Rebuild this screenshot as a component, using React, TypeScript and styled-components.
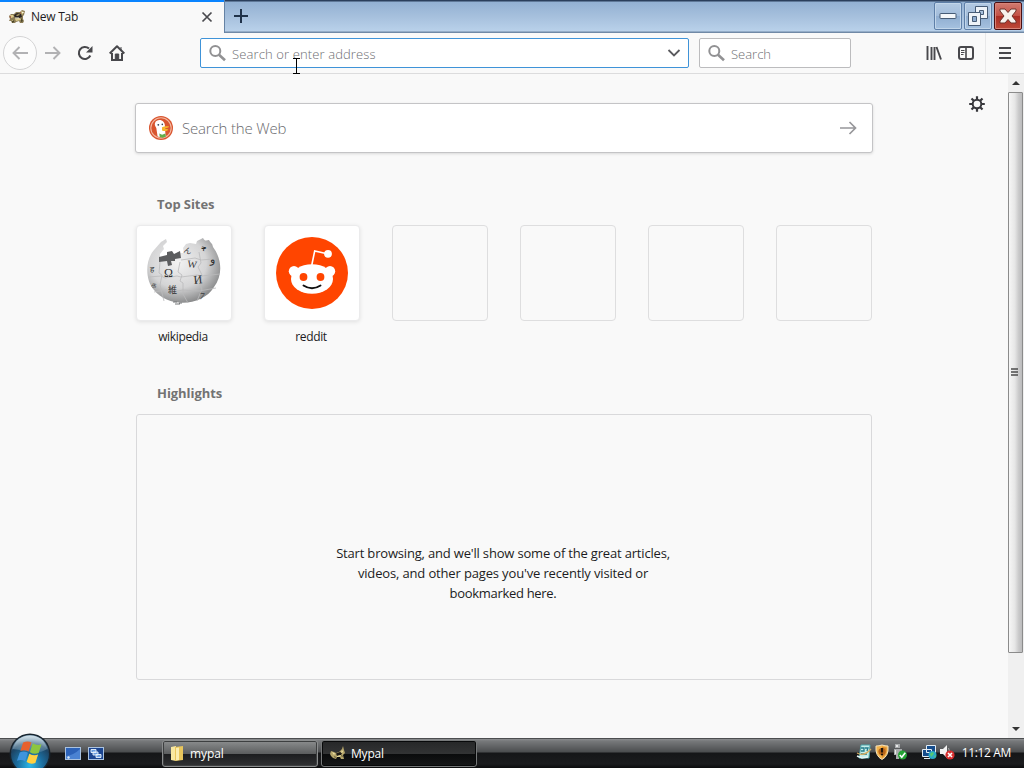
import React from "react";
import styled, { createGlobalStyle } from "styled-components";

const GlobalStyle = createGlobalStyle`
  * { box-sizing: border-box; }
  body { margin: 0; overflow: hidden; }
  button { border: 0; padding: 0; margin: 0; background: none; font: inherit; }
  svg { display: block; flex: none; }
`;

const Desktop = styled.div`
  position: relative;
  width: 1024px;
  height: 768px;
  display: flex;
  flex-direction: column;
  background: #f9f9f9;
  color: #0c0c0d;
  font-family: "Open Sans", "Noto Sans", sans-serif;
  font-size: 12px;
  overflow: hidden;
`;

const Text = styled.span<{ $size?: number; $track?: number; $color?: string; $weight?: number }>`
  font-size: ${(p) => p.$size ?? 12}px;
  letter-spacing: ${(p) => p.$track ?? 0}px;
  color: ${(p) => p.$color ?? "#1c1c22"};
  font-weight: ${(p) => p.$weight ?? 400};
  line-height: 20px;
  white-space: nowrap;
`;

/* ---------- title bar ---------- */

const TitleBar = styled.header`
  height: 33px;
  flex: none;
  display: flex;
  align-items: stretch;
  background: linear-gradient(#2b3f5c 0, #2b3f5c 1px, #93b1d3 2px, #a6c0dd 50%, #b9d1ea 31px, #7089a6 32px, #7089a6 33px);
`;

const Tab = styled.div`
  width: 224px;
  height: 33px;
  border-top: 2px solid #0a84ff;
  background: #f9f9f9;
  display: flex;
  align-items: center;
  padding: 0 11px 1px 9px;
  gap: 6px;
  & > :last-child { margin-left: auto; }
`;

const NewTabButton = styled.button`
  width: 33px;
  display: flex;
  align-items: center;
  justify-content: center;
  padding-bottom: 1px;
  border-left: 1px solid #6582a4;
`;

const WindowButtons = styled.div`
  margin-left: auto;
  display: flex;
  gap: 2px;
  padding: 2px 2px 0 0;
`;

const WindowButton = styled.button<{ $close?: boolean }>`
  width: 28px;
  height: 28px;
  display: flex;
  align-items: center;
  justify-content: center;
  border: 1px solid ${(p) => (p.$close ? "#4a1013" : "#5e7fa8")};
  border-radius: 2px;
  box-shadow: inset 0 0 0 1px ${(p) => (p.$close ? "#d88478" : "#c2d6ea")};
  background: ${(p) =>
    p.$close
      ? "linear-gradient(#d17b70, #c35247 48%, #a92c24 50%, #bd4a39)"
      : "linear-gradient(#b3cae3, #a3bddb 48%, #8fadd0 50%, #a6c2e0)"};
`;

/* ---------- navigation bar ---------- */

const NavBar = styled.nav`
  height: 41px;
  flex: none;
  display: flex;
  align-items: center;
  padding-left: 3px;
  border-bottom: 1px solid #dcdcdd;
  background: #f9f9f9;
`;

const BackButton = styled.button`
  width: 34px;
  height: 34px;
  border: 1px solid #d4d4d5;
  border-radius: 50%;
  background: #fcfcfc;
  display: flex;
  align-items: center;
  justify-content: center;
`;

const NavButton = styled.button`
  width: 32px;
  height: 32px;
  display: flex;
  align-items: center;
  justify-content: center;
`;

const Field = styled.div<{ $width: number; $active?: boolean }>`
  width: ${(p) => p.$width}px;
  height: 30px;
  margin-right: 10px;
  display: flex;
  align-items: center;
  gap: 6px;
  padding: 0 6px 0 8px;
  border: 1px solid ${(p) => (p.$active ? "#3f93d8" : "#bcbcbe")};
  border-radius: 2px;
  background: #fff;
  & > span { padding-top: 2px; }
`;

const FieldEnd = styled.div`
  margin-left: auto;
`;

const NavLeft = styled.div`
  display: flex;
  align-items: center;
  width: 197px;
`;

const NavRight = styled.div`
  margin-left: auto;
  display: flex;
  align-items: center;
`;

const MenuSlot = styled.div`
  height: 40px;
  width: 39px;
  margin-left: 3px;
  border-left: 1px solid #e8e8e9;
  display: flex;
  align-items: center;
  justify-content: center;
`;

/* ---------- page ---------- */

const Viewport = styled.div`
  height: 664px;
  flex: none;
  display: flex;
`;

const Page = styled.main`
  width: 1008px;
  flex: none;
  display: flex;
  flex-direction: column;
  align-items: center;
  padding-top: 29px;
`;

const PageHead = styled.div`
  width: 738px;
  position: relative;
`;

const SearchBox = styled.div`
  height: 50px;
  display: flex;
  align-items: center;
  gap: 9px;
  padding: 0 15px 0 13px;
  border: 1px solid #c4c4c6;
  border-radius: 3px;
  background: #fff;
  box-shadow: 0 1px 3px rgba(0, 0, 0, 0.13);
  & > :last-child { margin-left: auto; }
`;

const SettingsButton = styled.button`
  position: absolute;
  left: 834px;
  top: -7px;
`;

const Section = styled.section`
  width: 736px;
`;

const SectionTitle = styled.h3<{ $top: number }>`
  margin: ${(p) => p.$top}px 0 11px 21px;
  height: 20px;
  display: flex;
  align-items: center;
`;

const Sites = styled.div`
  display: flex;
  gap: 32px;
`;

const Site = styled.div`
  width: 96px;
  display: flex;
  flex-direction: column;
  align-items: center;
  gap: 6px;
`;

const Tile = styled.div<{ $filled?: boolean }>`
  width: 96px;
  height: 96px;
  border-radius: 4px;
  border: 1px solid ${(p) => (p.$filled ? "#ebebec" : "#dededf")};
  background: ${(p) => (p.$filled ? "#fff" : "transparent")};
  box-shadow: ${(p) => (p.$filled ? "0 1px 4px rgba(12, 12, 13, 0.1)" : "none")};
  display: flex;
  align-items: center;
  justify-content: center;
`;

const SiteLabel = styled.div`
  height: 20px;
  margin-right: 2px;
`;

const EmptyHighlights = styled.div`
  height: 266px;
  border: 1px solid #d9d9db;
  border-radius: 3px;
  display: flex;
  flex-direction: column;
  align-items: center;
  padding: 128px 2px 0 0;
`;

const Scrollbar = styled.div`
  width: 16px;
  flex: none;
  display: flex;
  flex-direction: column;
  align-items: flex-start;
  background: #f0f0f0;
`;

const ScrollArrow = styled.div`
  height: 18px;
  width: 16px;
  display: flex;
  align-items: center;
  justify-content: center;
`;

const ScrollThumb = styled.div`
  width: 15px;
  height: 561px;
  margin-bottom: auto;
  padding: 0 1px 2px 0;
  border: 1px solid #8b8b8b;
  border-radius: 1px;
  background: linear-gradient(90deg, #f6f6f6, #e6e6e6 45%, #c9c9ca 75%, #bcbcbd);
  display: flex;
  align-items: center;
  justify-content: center;
`;

/* ---------- taskbar ---------- */

const Taskbar = styled.footer`
  height: 30px;
  flex: none;
  display: flex;
  align-items: center;
  background: linear-gradient(#4c4e50 0, #4c4e50 1px, #8c8e90 1px, #77797b 3px, #4b4d4f 14px, #151618 15px, #1b1c1e 26px, #0b0c0d 30px);
`;

const StartButton = styled.button`
  width: 44px;
  height: 38px;
  margin: -8px 0 0 7px;
  align-self: flex-start;
  position: relative;
`;

const QuickLaunch = styled.div`
  display: flex;
  gap: 7px;
  padding-left: 14px;
  width: 111px;
`;

const TaskButton = styled.button<{ $active?: boolean }>`
  width: 156px;
  height: 27px;
  margin-right: 3px;
  display: flex;
  align-items: center;
  gap: 5px;
  padding: 0 0 0 ${(p) => (p.$active ? 8 : 6)}px;
  border-radius: 3px;
  border: 1px solid ${(p) => (p.$active ? "#77797a" : "#8b8d8e")};
  box-shadow: inset 0 0 0 1px ${(p) => (p.$active ? "#08090a" : "#3d3f40")};
  background: ${(p) =>
    p.$active
      ? "linear-gradient(#262728, #323334 50%, #0a0b0c 52%, #161718)"
      : "linear-gradient(#8b8d8e, #5d5f60 50%, #1c1d1f 52%, #303133)"};
  & > span { padding-top: 1px; }
`;

const Tray = styled.div`
  margin-left: auto;
  display: flex;
  align-items: center;
  padding: 0 13px 3px 0;
  gap: 2px;
`;

const TrayGap = styled.div`
  width: 9px;
`;

const Clock = styled.div`
  margin-left: 4px;
  padding-top: 3px;
`;

const Cursor = styled.div`
  position: absolute;
  left: 293px;
  top: 58px;
`;

/* ---------- drawings ---------- */

const Mascot = () => (
  <svg width="16" height="16" viewBox="0 0 16 16">
    <path d="M0 7l2-2 3 0 2-2 4 0 2-2 3 1-1 4-1 1 0 3 1 2-1 2-3 0-1-2-3 1-1 1-3 0-1-2-2 0 1-2z" fill="#8b7c55" />
    <path d="M1 6l3 0 1 2-3 1zM12 2l3 1-2 3zM6 10l5-1 1 2-5 1zM3 11l2 0 0 2-2 0z" fill="#dccb8c" />
    <path d="M5 6l3-2 4 1 1 3-3 1-4 0z" fill="#2b2522" />
    <path d="M7 6l3-1 1 1-3 1z" fill="#b8a468" />
    <path d="M6 8.500h4v1H6zM13 3h1.500v1H13z" fill="#fbf5e0" />
    <path d="M3 12l2-1 0 2-2 1zM12 9l2 3-2 1z" fill="#4a4528" />
    <path d="M0 8l2-1v2zM11 4l1-1v2z" fill="#a8553f" />
  </svg>
);

const TaskMascot = () => (
  <svg width="16" height="16" viewBox="0 0 16 16">
    <path d="M1 6l3 1 2 1 3-1 3-3 1-3 1 4 1 3-2 2 1 4-3 0-1-2-3 0-1 2-3-1-2-2-1-2z" fill="#b5a56a" />
    <path d="M6 8.500l4-1.500 2 1-1 2-4 1z" fill="#1d1a16" />
    <path d="M2 7l3 1.500L4 10zM7 11l4-1-1 1.500-3 .5zM12 5l1 2-2 1z" fill="#f3e6a8" />
    <path d="M4 11l2 1-1 1zM12 10l1 2-2-1z" fill="#4a4226" />
  </svg>
);

const Magnifier = () => (
  <svg width="17" height="18" viewBox="0 0 17 18" fill="none" stroke="#919193">
    <circle cx="6.300" cy="6.900" r="5" strokeWidth="2" />
    <path d="M10 10.700l6 5.600" strokeWidth="2.600" />
  </svg>
);

const Duck = () => (
  <svg width="24" height="24" viewBox="0 0 24 24">
    <circle cx="12" cy="12" r="12" fill="#d9552f" />
    <circle cx="12" cy="12" r="10.200" fill="none" stroke="#f3b9a2" strokeWidth="1.100" />
    <path d="M6 7c1.500-3.500 6-3.800 8.600-1 1.400 1.700 1.400 3.800 1.400 6l.6 8.300c-3 1.400-5.500 1.200-8 .2L7.300 12C6 10 5.500 8.500 6 7z" fill="#fff" />
    <path d="M13 11.300c2-1.200 4.600-1.400 7-.8.300 1.200-3 1.500-4.600 2.200 1.700.4 3.300.2 3.900.7-.5 1.900-5 2.300-6.300.8z" fill="#f7b62c" />
    <path d="M10.300 17.500l2.800 1.200 3.300-1.200.4 3.300-3.300 1-2.800-.8z" fill="#62ad4a" />
    <circle cx="9.300" cy="8.800" r=".9" fill="#345" />
    <circle cx="13.300" cy="8.400" r=".8" fill="#345" />
  </svg>
);

const pieces: [string, number, number, number, number][] = [
  ["Ω", 17, 39, 12, 0],
  ["W", 40, 29, 10, 8],
  ["И", 47, 46, 12, -6],
  ["維", 21, 55, 9, 0],
  ["و", 63, 25, 11, 0],
  ["7", 52, 61, 10, 10],
  ["ん", 36, 14, 8, 20],
  ["ቅ", 54, 13, 8, 0],
  ["ह", 3, 34, 8, 0],
  ["க", 4, 49, 8, 10],
];

const WikiGlobe = () => (
  <svg width="74" height="70" viewBox="0 0 74 70">
    <defs>
      <radialGradient id="globe" cx="42%" cy="38%" r="65%">
        <stop offset="0" stopColor="#f2f2f2" />
        <stop offset=".6" stopColor="#d4d4d5" />
        <stop offset="1" stopColor="#848586" />
      </radialGradient>
    </defs>
    <path
      d="M14 4l5-3 1 3-4 4 1 3-4 5v5l4-1 3-2 5 1 8-1 0-3 4 0-1-5 3-4 4-1 6 1 1-3 6-3c2 4 4 2 6 2 2 4 3 2 4 7 9 12 10 28 1 40-12 20-46 21-60 3C-2 42-2 22 7 12z"
      fill="url(#globe)"
    />
    <path d="M12 19l8-2 0-3 5-1 2 3 6-3 1 7-6 1 0 2-4 0 1 4-4 1-1-5-8 1z" fill="#5c5d5f" />
    <path
      d="M13 24l-1 11 3 2-2 10 4 16M33 24l-2 10 4 3-2 6 3 2v11l5 9M52 14l2 11-3 4 4 8-2 10 2 4-5 12M2 39l12-1 4 2 12-2 4 1 16-2 5 1 18-2M7 54l12-2 5 2 12-2 16 1 17-3M34 22l14-2 6 2 12-1"
      fill="none"
      stroke="#bababb"
      strokeWidth=".8"
    />
    <path d="M26 64h4M32 65h3M28 66h5" stroke="#77787a" strokeWidth="1.200" />
    {pieces.map(([char, x, y, size, turn]) => (
      <text
        key={char}
        x={x}
        y={y}
        fontSize={size}
        transform={`rotate(${turn} ${x} ${y})`}
        fontFamily='"Liberation Serif", "Noto Sans CJK JP", serif'
        fontWeight="400"
        fill="#2f3031"
      >
        {char}
      </text>
    ))}
  </svg>
);

const RedditLogo = () => (
  <svg width="72" height="72" viewBox="0 0 72 72">
    <circle cx="36" cy="36" r="36" fill="#ff4500" />
    <path d="M35.800 28l2.900-14 13.500 3" fill="none" stroke="#fff" strokeWidth="1.600" />
    <circle cx="52" cy="16.800" r="3.900" fill="#fff" />
    <circle cx="18" cy="34.200" r="5.200" fill="#fff" />
    <circle cx="54" cy="34.200" r="5.200" fill="#fff" />
    <ellipse cx="36" cy="42" rx="21" ry="14.800" fill="#fff" />
    <circle cx="27.500" cy="40" r="3.900" fill="#ff4500" />
    <circle cx="44.500" cy="40" r="3.900" fill="#ff4500" />
    <path d="M27.500 48.500q8.500 5.600 17 0" fill="none" stroke="#111" strokeWidth="1.900" strokeLinecap="round" />
  </svg>
);

const Gear = () => (
  <svg width="16" height="16" viewBox="0 0 16 16" fill="none" stroke="#38383d">
    <circle cx="8" cy="8" r="4.300" strokeWidth="2" />
    <path
      d="M8 .2v3.300M8 12.500v3.300M.2 8h3.300M12.500 8h3.300M2.500 2.500l2.300 2.300M11.200 11.200l2.300 2.300M2.500 13.500l2.300-2.300M11.200 4.800l2.300-2.300"
      strokeWidth="2.200"
    />
  </svg>
);

const StartOrb = () => (
  <svg width="44" height="38" viewBox="0 0 44 38">
    <defs>
      <radialGradient id="orb" cx="50%" cy="80%" r="75%">
        <stop offset="0" stopColor="#2bb7e8" />
        <stop offset=".45" stopColor="#1c6d9e" />
        <stop offset=".8" stopColor="#1d4362" />
        <stop offset="1" stopColor="#6d8ea6" />
      </radialGradient>
      <linearGradient id="shine" x2="0" y2="1">
        <stop offset="0" stopColor="#e4eff4" stopOpacity=".85" />
        <stop offset="1" stopColor="#a5c6d8" stopOpacity=".2" />
      </linearGradient>
    </defs>
    <circle cx="23" cy="24" r="20.500" fill="#18242e" />
    <circle cx="23" cy="24" r="19" fill="url(#orb)" />
    <path d="M5.500 19C8.500 9 15.500 5.500 23 5.500S37.500 9 40.500 19q-9 5-17 3t-18-3z" fill="url(#shine)" />
    <g transform="rotate(4 23 22)">
      <path d="M15.500 13q4.500-2.600 8.300-.5l-2.300 9q-4-2-8.200.3z" fill="#e8602c" />
      <path d="M25.200 13.200q4.300 2.500 8.800.3l-2.300 9q-4.500 2-8.800-.3z" fill="#8dc63f" />
      <path d="M12.800 23.200q4-2.300 8.200-.3l-2.200 8.600q-4-2-8.200.2z" fill="#3f94dc" />
      <path d="M22.500 23.700q4.300 2.300 8.800.3l-2.200 8.700q-4.500 2-8.800-.4z" fill="#ffd040" />
    </g>
  </svg>
);

const DesktopIcon = () => (
  <svg width="16" height="13" viewBox="0 0 16 13">
    <rect x=".5" y=".5" width="15" height="12" fill="#2c62b8" stroke="#a9c2e0" />
    <path d="M1 9Q9 8 15 2v10H1z" fill="#4a82d2" />
    <path d="M2 10l2-1 1 2-2 1z" fill="#d7e6f5" />
  </svg>
);

const SwitcherIcon = () => (
  <svg width="16" height="13" viewBox="0 0 16 13">
    <rect x=".5" y=".5" width="15" height="12" fill="#1c4590" stroke="#a9c2e0" />
    <path d="M3 2.500h5v3H3zM5 5h5v3H5zM8 7.500h5v3H8z" fill="#6b9ee0" stroke="#eaf3fc" strokeWidth=".9" />
  </svg>
);

const FolderIcon = () => (
  <svg width="16" height="17" viewBox="0 0 16 17">
    <path d="M2 2l5-1v15l-5-1z" fill="#f9e8a0" />
    <path d="M6 2l8-1v14l-8 1z" fill="#e9c65c" />
    <path d="M7 3l3-.5V15l-3 .5z" fill="#fbedb0" />
  </svg>
);

const AnytimeIcon = () => (
  <svg width="17" height="16" viewBox="0 0 17 16">
    <path d="M5 1h9l-1 13H3z" fill="#c4ede9" stroke="#4da6ac" />
    <path d="M5 4h3v3H5M9 4l3 0-1 3M5 10h6" fill="none" stroke="#237b8a" strokeWidth="1.300" />
    <path d="M1 9q7 4 14-4" fill="none" stroke="#d8ad62" strokeWidth="1.300" />
    <path d="M1 12l5 2 6-1" fill="none" stroke="#e8f7f7" strokeWidth="1.500" />
  </svg>
);

const ShieldIcon = () => (
  <svg width="14" height="16" viewBox="1 0 14 16">
    <path d="M8 1q3 1 6 1 1 10-6 13.500Q1 12 2 2q3 0 6-1z" fill="#f2b34c" stroke="#f6e3bf" />
    <path d="M8 2.500q2 1 4.500 1 .5 7-4.500 10.500z" fill="#d98a2c" />
    <circle cx="8" cy="7.500" r="3.600" fill="#b8651a" />
    <path d="M8 4v4.500" stroke="#201409" strokeWidth="2.200" />
    <circle cx="8" cy="10.500" r="1.100" fill="#201409" />
  </svg>
);

const DeviceIcon = () => (
  <svg width="17" height="16" viewBox="0 0 17 16">
    <path d="M4 0h5v4H4zM3 5h8v6H8v4H5v-4H3z" fill="#a8abad" />
    <path d="M5 1h2v2H5zM4 6h1v4H4z" fill="#e9e9e9" />
    <circle cx="11.500" cy="11" r="4.500" fill="#23a334" />
    <path d="M8.800 11l2 2.300 3.500-4.500" fill="none" stroke="#fff" strokeWidth="1.600" />
  </svg>
);

const NetworkIcon = () => (
  <svg width="16" height="16" viewBox="0 0 16 16">
    <path d="M5.500 1.500h9v7h-9zM1.500 5.500h9v7h-9z" fill="#164d8c" stroke="#e3edf5" />
    <path d="M3 14.500h6" stroke="#e3edf5" />
    <circle cx="11.500" cy="11" r="4" fill="#2aa7c9" />
    <path d="M9 10q2-3 4-1l-1 2-2 2zM13 12l2-1-1 3z" fill="#55ca70" />
  </svg>
);

const VolumeIcon = () => (
  <svg width="17" height="16" viewBox="0 0 17 16">
    <path d="M1 5h3l4-4v13l-4-4H1z" fill="#f2f2f2" />
    <path d="M9.500 4q2 3 0 7" fill="none" stroke="#aaa" />
    <circle cx="11" cy="11" r="4.600" fill="#d72f2f" />
    <path d="M9 9l4 4M13 9l-4 4" stroke="#fff" strokeWidth="1.600" />
  </svg>
);

const emptyLines: [string, number][] = [
  ["Start browsing, and we'll show some of the great articles,", -0.18],
  ["videos, and other pages you've recently visited or", -0.15],
  ["bookmarked here.", -0.3],
];

export default function App() {
  return (
    <Desktop>
      <GlobalStyle />
      <TitleBar>
        <Tab>
          <Mascot />
          <Text $track={-0.25}>New Tab</Text>
          <svg width="12" height="12" viewBox="0 0 12 12" stroke="#4a4a4f" strokeWidth="1.700">
            <path d="M1.500 1.500l9 9M10.500 1.500l-9 9" />
          </svg>
        </Tab>
        <NewTabButton>
          <svg width="14" height="14" viewBox="0 0 14 14" stroke="#203249" strokeWidth="2">
            <path d="M7 0v14M0 7h14" />
          </svg>
        </NewTabButton>
        <WindowButtons>
          <WindowButton>
            <svg width="18" height="8" viewBox="0 0 18 8">
              <rect x="1" y="1.500" width="16" height="5" rx=".5" fill="#f4f7fa" stroke="#475c76" />
            </svg>
          </WindowButton>
          <WindowButton>
            <svg width="22" height="20" viewBox="0 0 22 20" fill="#eef3f8" stroke="#475c76" fillRule="evenodd">
              <path d="M8.500.5h12v12h-12zM12.500 4.500v4h4v-4z" />
              <path d="M1.500 6.500h12v13h-12z" />
              <path d="M5.500 10.500h4v5h-4z" fill="#8fadd0" />
            </svg>
          </WindowButton>
          <WindowButton $close>
            <svg width="18" height="16" viewBox="0 0 18 16">
              <path
                d="M1 1h5l3 3.500L12 1h5v2l-4 5 4 5v2h-5l-3-3.500L6 15H1v-2l4-5-4-5z"
                fill="#f7f2ee"
                stroke="#6e342d"
              />
            </svg>
          </WindowButton>
        </WindowButtons>
      </TitleBar>

      <NavBar>
        <NavLeft>
          <BackButton>
            <svg width="16" height="14" viewBox="0 0 16 14" fill="none" stroke="#b2b2b4" strokeWidth="1.900">
              <path d="M16 7H1.500M7.500 1l-6 6 6 6" />
            </svg>
          </BackButton>
          <NavButton>
            <svg width="16" height="14" viewBox="0 0 16 14" fill="none" stroke="#b2b2b4" strokeWidth="1.900">
              <path d="M0 7h14.500M8.500 1l6 6-6 6" />
            </svg>
          </NavButton>
          <NavButton>
            <svg width="16" height="16" viewBox="0 0 16 16" fill="none" stroke="#48484c" strokeWidth="2.100">
              <path d="M13.300 10.500A6 6 0 1 1 12 3.600" />
              <path d="M15.500 1v6.500H9z" fill="#48484c" stroke="none" />
            </svg>
          </NavButton>
          <NavButton>
            <svg width="16" height="16" viewBox="0 0 16 16" fill="none" stroke="#48484c" strokeWidth="2">
              <path d="M.7 8.500L8 1.300l7.300 7.200" strokeLinejoin="round" />
              <path d="M3 8v7h10V8" />
              <path d="M6.300 14.500V9h3.400v5.500zM12 2v3" fill="#48484c" strokeWidth="1" />
            </svg>
          </NavButton>
        </NavLeft>
        <Field $width={489} $active>
          <Magnifier />
          <Text $size={13} $color="#6e6e72" $weight={300} $track={0.12}>Search or enter address</Text>
          <FieldEnd>
            <svg width="16" height="10" viewBox="0 0 16 10" fill="none" stroke="#5a5a5e" strokeWidth="1.800">
              <path d="M2.500 2L8 7.500 13.500 2" />
            </svg>
          </FieldEnd>
        </Field>
        <Field $width={152}>
          <Magnifier />
          <Text $size={13} $color="#6e6e72" $weight={300}>Search</Text>
        </Field>
        <NavRight>
          <NavButton>
            <svg width="16" height="14" viewBox="0 0 16 14" stroke="#48484c" strokeWidth="1.900">
              <path d="M1.500 0v14M5.500 1v13M8.500 1v13M10.500 1l4.500 12.500" />
            </svg>
          </NavButton>
          <NavButton>
            <svg width="16" height="14" viewBox="0 0 16 14" fill="none" stroke="#48484c">
              <rect x="1" y="1" width="14" height="12" rx="2" strokeWidth="2" />
              <path d="M8 1v12" strokeWidth="1.600" />
              <path d="M3 4.500h3.500M3 6.500h3.500M3 8.500h2.500" />
            </svg>
          </NavButton>
          <MenuSlot>
            <svg width="12" height="12" viewBox="0 0 12 12" stroke="#48484c" strokeWidth="2">
              <path d="M0 1h12M0 6h12M0 11h12" />
            </svg>
          </MenuSlot>
        </NavRight>
      </NavBar>

      <Viewport>
        <Page>
          <PageHead>
            <SearchBox>
              <Duck />
              <Text $size={15} $color="#6a6a6e" $weight={300} $track={-0.17}>Search the Web</Text>
              <svg width="17" height="14" viewBox="0 0 17 14" fill="none" stroke="#97979a" strokeWidth="1.700">
                <path d="M0 7h15.500M9.500 1l6 6-6 6" />
              </svg>
            </SearchBox>
            <SettingsButton>
              <Gear />
            </SettingsButton>
          </PageHead>
          <Section>
            <SectionTitle $top={41}>
              <Text $size={13} $weight={700} $color="#737373" $track={-0.08}>Top Sites</Text>
            </SectionTitle>
            <Sites>
              <Site>
                <Tile $filled><WikiGlobe /></Tile>
                <SiteLabel><Text $track={-0.35}>wikipedia</Text></SiteLabel>
              </Site>
              <Site>
                <Tile $filled><RedditLogo /></Tile>
                <SiteLabel><Text $track={-0.35}>reddit</Text></SiteLabel>
              </Site>
              {[3, 4, 5, 6].map((slot) => (
                <Site key={slot}><Tile /></Site>
              ))}
            </Sites>
          </Section>
          <Section>
            <SectionTitle $top={36}>
              <Text $size={13} $weight={700} $color="#737373" $track={-0.05}>Highlights</Text>
            </SectionTitle>
            <EmptyHighlights>
              {emptyLines.map(([line, track]) => (
                <Text key={line} $size={13} $track={track}>{line}</Text>
              ))}
            </EmptyHighlights>
          </Section>
        </Page>
        <Scrollbar>
          <ScrollArrow>
            <svg width="8" height="4" viewBox="0 0 8 4"><path d="M0 4l4-4 4 4z" fill="#333" /></svg>
          </ScrollArrow>
          <ScrollThumb>
            <svg width="8" height="8" viewBox="0 0 8 8" stroke="#4c4c4c" strokeWidth="1.500">
              <path d="M0 1h7M0 4h7M0 7h7" />
            </svg>
          </ScrollThumb>
          <ScrollArrow>
            <svg width="8" height="4" viewBox="0 0 8 4"><path d="M0 0l4 4 4-4z" fill="#333" /></svg>
          </ScrollArrow>
        </Scrollbar>
      </Viewport>

      <Taskbar>
        <StartButton><StartOrb /></StartButton>
        <QuickLaunch>
          <DesktopIcon />
          <SwitcherIcon />
        </QuickLaunch>
        <TaskButton>
          <FolderIcon />
          <Text $color="#fff" $track={-0.1}>mypal</Text>
        </TaskButton>
        <TaskButton $active>
          <TaskMascot />
          <Text $color="#fff" $track={-0.2}>Mypal</Text>
        </TaskButton>
        <Tray>
          <AnytimeIcon />
          <ShieldIcon />
          <DeviceIcon />
          <TrayGap />
          <NetworkIcon />
          <VolumeIcon />
          <Clock><Text $color="#fff" $track={-0.35}>11:12 AM</Text></Clock>
        </Tray>
      </Taskbar>

      <Cursor>
        <svg width="7" height="16" viewBox="0 0 7 16" fill="none" stroke="#000">
          <path d="M0 .5h7M3.500 0v16M0 15.500h7" />
        </svg>
      </Cursor>
    </Desktop>
  );
}
